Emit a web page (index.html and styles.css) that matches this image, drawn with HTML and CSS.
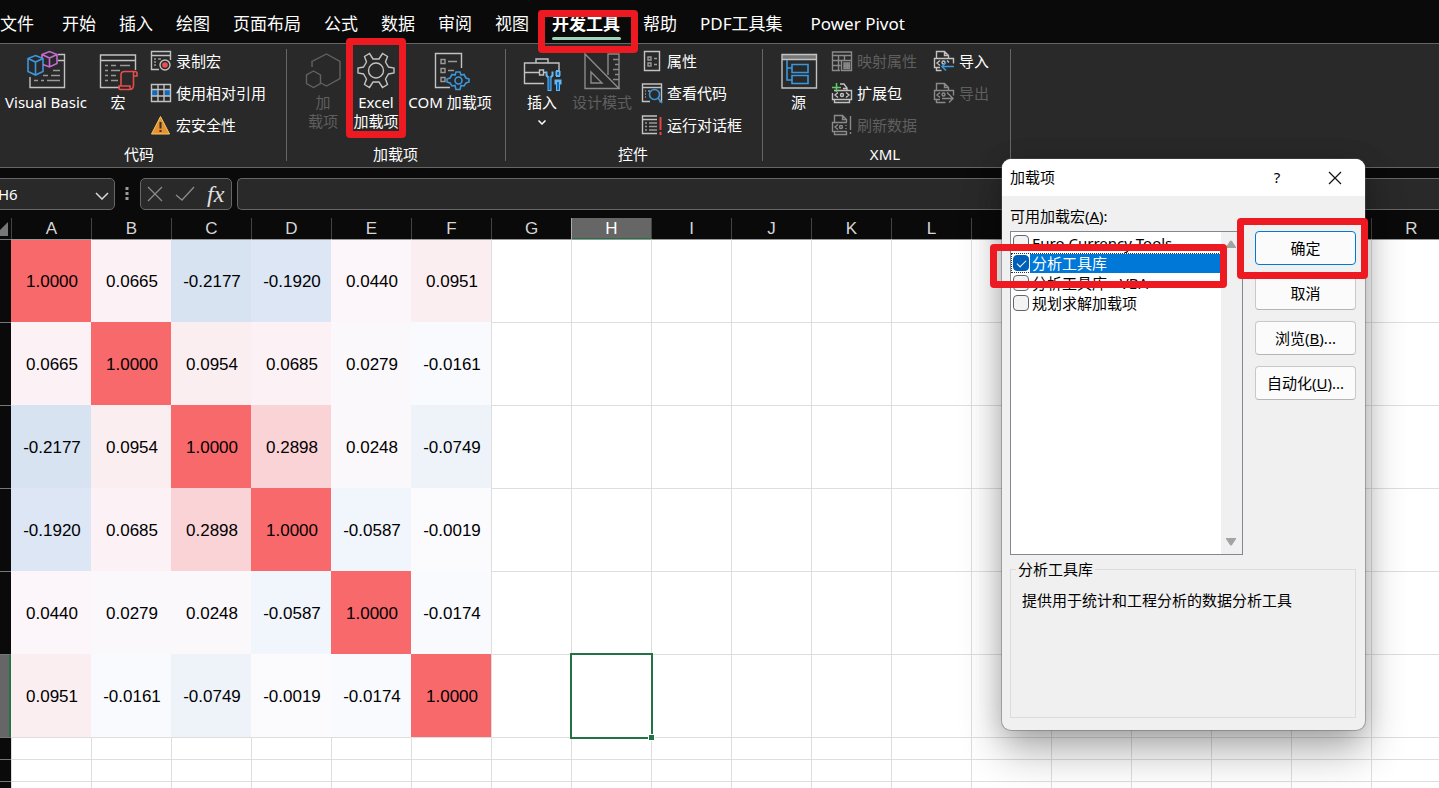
FILE: index.html
```html
<!DOCTYPE html>
<html lang="zh-CN">
<head>
<meta charset="utf-8">
<title>Excel - 开发工具</title>
<link rel="stylesheet" href="styles.css">
</head>
<body>
<nav class="tabs">
  <button class="tab">文件</button>
  <button class="tab tab-home">开始</button>
  <button class="tab">插入</button>
  <button class="tab">绘图</button>
  <button class="tab">页面布局</button>
  <button class="tab">公式</button>
  <button class="tab">数据</button>
  <button class="tab">审阅</button>
  <button class="tab">视图</button>
  <button class="tab active">开发工具<span class="mark mark-tab"></span></button>
  <button class="tab">帮助</button>
  <button class="tab">PDF工具集</button>
  <button class="tab tab-last">Power Pivot</button>
</nav>

<section class="ribbon">
  <div class="group group-code">
    <div class="tools">
      <button class="big vb">
        <svg class="icon" viewBox="0 0 40 40"><path class="l" d="M32 4.500h6.500V37.500H4V27M32 10.500h6.500"/><path class="d" d="M27 20.500h7M17 25.500h5M25 25.500h9M8 30.500h4M15 30.500h3M21 30.500h13"/><path class="bl" d="M9.500 5.500l7.500 3v13l-7.500 3.500-7.500-3.500v-13zM2 8.500l7.500 3.500 7.500-3.500M9.500 12v13"/><path class="pu" d="M16 8V4.500l7.500-3 7.500 3v9L23.500 17 17 14.500M16 4.500L23.500 8 31 4.500M23.500 8v9"/></svg>
        <span>Visual Basic</span>
      </button>
      <button class="big macro">
        <svg class="icon" viewBox="0 0 40 40"><path class="l" d="M22 37.500H2.500V5h35v15M2.500 10.500h35"/><path class="d" d="M7 15.500h3M13 15.500h5M22 15.500h10M7 20.500h3M13 20.500h9M7 25.500h3M13 25.500h5M7 30.500h3M13 30.500h7"/><path class="re" d="M23 36V25q0-3.500 3.500-3.500H37q2 0 2 2V26h-4M35.500 26v-2.500q0-2 1.500-2M35.500 26v9q0 4.500-4 4.500H23q-2 0-2-1.500v-2h11v2q0 1.500 1.500 1.500"/></svg>
        <span>宏</span>
      </button>
      <div class="smalls">
        <button class="small"><svg class="ico" viewBox="0 0 20 20"><path class="l" d="M8 18.500H.5V.5h19V9M.5 4.500h19"/><path class="d" d="M3 8h2M7 8h3M3 11h2M3 14h2"/><circle class="l" cx="14" cy="14" r="5"/><circle cx="14" cy="14" r="2.800" fill="#f04f4f"/></svg>录制宏</button>
        <button class="small"><svg class="ico" viewBox="0 0 20 20"><path fill="#0a6cc5" d="M1 7h5v6H1zM14 7h5v6h-5z"/><path class="l" d="M.5 1.500h19v17H.5zM.5 6.500h19M.5 13h19M7 1.500v17M13 1.500v17"/></svg>使用相对引用</button>
        <button class="small"><svg class="ico" viewBox="0 0 20 20"><path d="M9.500 1.500L18.500 19H.5z" fill="#e8912d" stroke="#f6c86a"/><path d="M9.500 7v6.500M9.500 15v2" stroke="#333" stroke-width="2"/></svg>宏安全性</button>
      </div>
    </div>
    <div class="caption">代码</div>
  </div>

  <div class="group group-addins">
    <div class="tools">
      <button class="big addin" disabled>
        <svg class="icon" viewBox="0 0 40 40"><path class="g" d="M9 17V11.500L23.500 4 37 11.500v17L23.500 36 17 32.500"/><path class="g" d="M10.500 21l7 4v8.500l-7 4-7-4V25z"/></svg>
        <span>加<br>载项</span>
      </button>
      <button class="big excel">
        <svg class="icon" viewBox="0 0 40 40"><path class="l" d="M13.500 3.500l3.500 5.500h6l3.500-5.500 5 3-2 5.500 3 5 5.500 1v5l-5.500 1-3 5 2 5.500-5 3-3.500-5.500h-6l-3.500 5.500-5-3 2-5.500-3-5-5.500-1v-5l5.500-1 3-5-2-5.500z"/><circle class="l" cx="20" cy="20.500" r="7.500"/></svg>
        <span>Excel<br>加载项</span>
        <span class="mark mark-excel"></span>
      </button>
      <button class="big com">
        <svg class="icon" viewBox="0 0 40 40"><path class="l" d="M20 37.500H5.500V3.500h26V18"/><path class="d" d="M11 9.500h4v4h-4zM11 18.500h4v4h-4zM11 27.500h4v4h-4zM18 11.500h9M18 20.500h6"/><path class="bl" d="M26 22h4l1 3 3-.5 2 3.500 3 1v3l-3 1-2 3-3-.5-1 4h-4l-1-4-3 .5-2-3-3-1v-3l3-1 2-3.500 3 .5z"/><circle class="bl" cx="28.500" cy="30.500" r="3.500"/></svg>
        <span>COM 加载项</span>
      </button>
    </div>
    <div class="caption">加载项</div>
  </div>

  <div class="group group-controls">
    <div class="tools">
      <button class="big insert">
        <svg class="icon" viewBox="0 0 40 40"><path class="l" d="M22 33.500H2.500V13H37v7M14 13V9h12v4M2.500 22.500h15M21 22.500h4"/><path class="l" d="M17.500 20h4v5h-4z"/><path d="M27.500 28v13M36 20v7M36 31v10" stroke="#69b5ee" stroke-width="4"/><path d="M24.500 21.500v4l3 3 3-3v-4" fill="none" stroke="#69b5ee" stroke-width="2"/><path d="M36 21v5M32.500 32h7" stroke="#69b5ee" stroke-width="5"/><path d="M27.500 27v13M36 22v3M36 32v8" stroke="#0d69b7" stroke-width="2"/></svg>
        <span>插入</span>
        <svg class="chev" viewBox="0 0 8 5"><path d="M.5.5L4 4 7.500.5"/></svg>
      </button>
      <button class="big design" disabled>
        <svg class="icon" viewBox="0 0 40 40"><path class="m" d="M3 4v34.500h34zM9 22v11h11zM26 25V4h11v34M37 9.500h-6M37 14.500h-4M37 19.500h-6M37 24.500h-4M37 29.500h-6"/></svg>
        <span>设计模式</span>
      </button>
      <div class="smalls">
        <button class="small"><svg class="ico" viewBox="0 0 20 20"><path class="l" d="M2.500.5h15v19h-15z"/><path class="d" d="M6 6h3v3H6zM6 12h3v3H6zM12 7.500h3M12 13.500h3"/></svg>属性</button>
        <button class="small"><svg class="ico" viewBox="0 0 20 20"><path class="l" d="M8 18.500H.5V1h19v17.500h-2M.5 4.500h19"/><path class="d" d="M3 8h1M6 8h2M3 11h1M3 14h1"/><circle class="bl" cx="12.500" cy="11.500" r="5"/><path class="bl" d="M16 15l4 5"/></svg>查看代码</button>
        <button class="small"><svg class="ico" viewBox="0 0 20 20"><path class="l" d="M15 18.500H.5V1H15M.5 4.500H15"/><path class="d" d="M3 8h2M7 8h8M3 11.500h2M7 11.500h8M3 15h2M7 15h8"/><path d="M18.500 2v13M18.500 17v3" stroke="#e64545" stroke-width="2"/></svg>运行对话框</button>
      </div>
    </div>
    <div class="caption">控件</div>
  </div>

  <div class="group group-xml">
    <div class="tools">
      <button class="big source">
        <svg class="icon" viewBox="0 0 40 40"><path fill="#777" d="M3 4h34v5H3z"/><path class="l" d="M3 4.500h34.500v33.500H3zM3 9.500h34.500"/><path class="bl" d="M8 10v20h5M8 18h5M13 14.500h16v8H13zM13 25.500h16v8H13z"/></svg>
        <span>源</span>
      </button>
      <div class="smalls maps">
        <button class="small" disabled><svg class="ico" viewBox="0 0 20 20"><path class="m" d="M8 19.500H.5V1h19v8M.5 4.500h19M.5 9.500h9M.5 14.500h8M6.500 5v14M12.500 5v4M9.500 9.500h10v10h-10zM12 12h2v2h-2zM15.500 12h2v2h-2zM12 15.500h2v2h-2zM15.500 15.500h2v2h-2z"/></svg>映射属性</button>
        <button class="small"><svg class="ico" viewBox="0 0 20 20"><path class="l" d="M8 1h4l3 4v2M15 5.500h-4M2 7.500h17.500v9H.5V10M2.500 16.500v3h15v-3M6 9.500l-3 2.500 3 2.500M14 9.500l3 2.500-3 2.500"/><circle class="l" cx="10" cy="12" r="1.500"/><path d="M4.500 0v9M0 4.500h9" stroke="#5fd068" stroke-width="1.500"/></svg>扩展包</button>
        <button class="small" disabled><svg class="ico" viewBox="0 0 20 20"><path class="m" d="M2.500 7V.5h8l4 4V7M10.500.5v4h4M15 7.500H.5v9H15M2.500 16.500v3h12v-3M6 9.500L3 12l3 2.500M14 10v1M14 13v1M18.500 1v14M18.500 17v2"/><circle class="m" cx="9" cy="12" r="1.500"/></svg>刷新数据</button>
      </div>
      <div class="smalls">
        <button class="small"><svg class="ico" viewBox="0 0 20 20"><path class="l" d="M2.500 7V.5h8l4 4V7M10.500.5v4h4M6 16.500H.5v-9h19v5M2.500 16.500v3h5M6 9.500L3 12l3 2.500M13 9.500l2 2"/><circle class="l" cx="9.500" cy="11.500" r="1.500"/><path class="bl" d="M20 15.500H8M12 11.500l-4 4 4 4"/></svg>导入</button>
        <button class="small" disabled><svg class="ico" viewBox="0 0 20 20"><path class="m" d="M2.500 7V.5h8l4 4V7M10.500.5v4h4M6 16.500H.5v-9h19v5M2.500 16.500v3h9M6 9.500L3 12l3 2.500M13 9.500l2 2M8 15.500h11M15 11.500l4 4-4 4"/><circle class="m" cx="9.500" cy="11.500" r="1.500"/></svg>导出</button>
      </div>
    </div>
    <div class="caption">XML</div>
  </div>
</section>

<section class="formula">
  <div class="namebox">
    <input aria-label="名称框" value="H6">
    <button aria-label="展开名称框"><svg width="14" height="8" viewBox="0 0 14 8"><path d="M1 1l6 6 6-6" fill="none" stroke="#d8d8d8" stroke-width="1.500"/></svg></button>
  </div>
  <svg class="dots" width="4" height="14" viewBox="0 0 4 14"><path d="M.5 0h3v3h-3zM.5 5h3v3h-3zM.5 10h3v3h-3z" fill="#999"/></svg>
  <div class="entry">
    <button aria-label="取消输入"><svg width="16" height="16" viewBox="0 0 16 16"><path d="M1 1l14 14M15 1L1 15" stroke="#8a8a8a" stroke-width="1.300"/></svg></button>
    <button aria-label="输入"><svg width="20" height="16" viewBox="0 0 20 16"><path d="M1 9l6 5L19 1" fill="none" stroke="#8a8a8a" stroke-width="1.300"/></svg></button>
    <button class="fx" aria-label="插入函数">fx</button>
  </div>
  <input class="content" aria-label="编辑栏">
</section>

<main class="sheet">
<table>
<colgroup><col class="rowcol"><col span="18" class="datacol"></colgroup>
<thead><tr><th class="corner"><svg width="8" height="14" viewBox="0 0 8 14"><path d="M8 0v14H0V8z" fill="#777"/></svg></th><th>A</th><th>B</th><th>C</th><th>D</th><th>E</th><th>F</th><th>G</th><th class="on">H</th><th>I</th><th>J</th><th>K</th><th>L</th><th>M</th><th>N</th><th>O</th><th>P</th><th>Q</th><th>R</th></tr></thead>
<tbody>
<tr class="tall"><th></th><td class="one">1.0000</td><td class="p2">0.0665</td><td class="n4">-0.2177</td><td class="n3">-0.1920</td><td class="p1">0.0440</td><td class="p3">0.0951</td><td></td><td></td><td></td><td></td><td></td><td></td><td></td><td></td><td></td><td></td><td></td><td></td></tr>
<tr class="tall"><th></th><td class="p2">0.0665</td><td class="one">1.0000</td><td class="p3">0.0954</td><td class="p2">0.0685</td><td class="p0">0.0279</td><td class="n0">-0.0161</td><td></td><td></td><td></td><td></td><td></td><td></td><td></td><td></td><td></td><td></td><td></td><td></td></tr>
<tr class="tall"><th></th><td class="n4">-0.2177</td><td class="p3">0.0954</td><td class="one">1.0000</td><td class="p4">0.2898</td><td class="p0">0.0248</td><td class="n2">-0.0749</td><td></td><td></td><td></td><td></td><td></td><td></td><td></td><td></td><td></td><td></td><td></td><td></td></tr>
<tr class="tall"><th></th><td class="n3">-0.1920</td><td class="p2">0.0685</td><td class="p4">0.2898</td><td class="one">1.0000</td><td class="n1">-0.0587</td><td class="z">-0.0019</td><td></td><td></td><td></td><td></td><td></td><td></td><td></td><td></td><td></td><td></td><td></td><td></td></tr>
<tr class="tall"><th></th><td class="p1">0.0440</td><td class="p0">0.0279</td><td class="p0">0.0248</td><td class="n1">-0.0587</td><td class="one">1.0000</td><td class="n0">-0.0174</td><td></td><td></td><td></td><td></td><td></td><td></td><td></td><td></td><td></td><td></td><td></td><td></td></tr>
<tr class="tall"><th class="on"></th><td class="p3">0.0951</td><td class="n0">-0.0161</td><td class="n2">-0.0749</td><td class="z">-0.0019</td><td class="n0">-0.0174</td><td class="one">1.0000</td><td></td><td class="selected"><span class="handle"></span></td><td></td><td></td><td></td><td></td><td></td><td></td><td></td><td></td><td></td><td></td></tr>
<tr><th></th><td></td><td></td><td></td><td></td><td></td><td></td><td></td><td></td><td></td><td></td><td></td><td></td><td></td><td></td><td></td><td></td><td></td><td></td></tr>
<tr><th></th><td></td><td></td><td></td><td></td><td></td><td></td><td></td><td></td><td></td><td></td><td></td><td></td><td></td><td></td><td></td><td></td><td></td><td></td></tr>
<tr><th></th><td></td><td></td><td></td><td></td><td></td><td></td><td></td><td></td><td></td><td></td><td></td><td></td><td></td><td></td><td></td><td></td><td></td><td></td></tr>
</tbody>
</table>
</main>

<div class="dialog" role="dialog" aria-label="加载项">
  <header class="titlebar">
    <span class="title">加载项</span>
    <button aria-label="帮助">?</button>
    <button aria-label="关闭"><svg width="14" height="14" viewBox="0 0 14 14"><path d="M1 1l12 12M13 1L1 13" stroke="#111" stroke-width="1.200"/></svg></button>
  </header>
  <div class="body">
    <div class="label">可用加载宏(<u>A</u>):</div>
    <div class="columns">
      <div class="listbox">
        <div class="options">
          <label><input type="checkbox">Euro Currency Tools</label>
          <label class="current"><input type="checkbox" checked><span>分析工具库</span></label>
          <label><input type="checkbox">分析工具库 - VBA</label>
          <label><input type="checkbox">规划求解加载项</label>
        </div>
        <div class="scroll">
          <svg width="10" height="8" viewBox="0 0 10 8"><path d="M4 1q1-1 2 0l4 6v1H0V7z" fill="#a3a3a3"/></svg>
          <svg width="10" height="8" viewBox="0 0 10 8"><path d="M4 7q1 1 2 0l4-6V0H0v1z" fill="#a3a3a3"/></svg>
        </div>
        <span class="mark mark-option"></span>
      </div>
      <div class="actions">
        <button class="primary">确定<span class="mark mark-ok"></span></button>
        <button>取消</button>
        <button>浏览(<u>B</u>)...</button>
        <button>自动化(<u>U</u>)...</button>
      </div>
    </div>
    <fieldset>
      <legend>分析工具库</legend>
      <p>提供用于统计和工程分析的数据分析工具</p>
    </fieldset>
  </div>
</div>
</body>
</html>
```

FILE: styles.css
```css
* { box-sizing: border-box; }

body {
  margin: 0;
  height: 100vh;
  overflow: hidden;
  display: flex;
  flex-direction: column;
  background: #0a0a0a;
  color: #fff;
  font: 15px/19px "Noto Sans", "Noto Sans CJK SC", sans-serif;
}

button, input {
  font: inherit;
  color: inherit;
  background: none;
  border: 0;
  padding: 0;
  margin: 0;
}

/* Tab strip */
.tabs {
  display: flex;
  flex: none;
  gap: 23px;
  height: 43px;
  font-size: 17px;
}
.tab { padding-top: 4px; white-space: nowrap; }
.tab-home { margin-left: 5px; }
.tab-last { margin-left: 5px; }
.tab.active {
  position: relative;
  font-weight: 700;
}
.tab.active::before {
  content: "";
  position: absolute;
  left: 0;
  right: -1px;
  top: 37px;
  height: 3px;
  border-radius: 2px;
  background: #9fd5b7;
}

/* Red highlight frames */
.mark {
  position: absolute;
  z-index: 5;
  border: 7px solid #ee1a22;
  border-radius: 4px;
  pointer-events: none;
}
.mark-tab { left: -14px; right: -18px; top: 10px; height: 43px; }
.mark-excel { left: 0; right: 0; top: -6px; height: 100px; }
.mark-option { left: -21px; right: 15px; top: 12px; height: 44px; }
.mark-ok { left: -19px; right: -13px; top: -14px; height: 61px; }

/* Ribbon */
.ribbon {
  display: flex;
  flex: none;
  height: 125px;
  background: #292929;
  border-top: 1px solid #666;
  border-bottom: 1px solid #666;
}
.group {
  display: flex;
  flex-direction: column;
  flex: none;
  position: relative;
}
.group::after {
  content: "";
  position: absolute;
  right: 0;
  top: 5px;
  bottom: 6px;
  width: 1px;
  background: #666;
}
.group-code { width: 287px; }
.group-addins { width: 219px; padding-left: 13px; }
.group-controls { width: 257px; padding-left: 16px; }
.group-xml { width: 248px; padding-left: 13px; }
.tools { display: flex; height: 101px; }
.caption { text-align: center; }
.group-code .caption { padding-right: 9px; }
.group-addins .caption { padding-right: 15px; }
.group-controls .caption { padding-right: 19px; }
.group-xml .caption { padding-right: 17px; }

.big {
  display: flex;
  flex-direction: column;
  align-items: center;
  flex: none;
  padding-top: 6px;
  position: relative;
  white-space: nowrap;
}
.big span { margin-top: 3px; }
.big .mark { margin: 0; }
.big:disabled, .small:disabled { color: #5f5f5f; }
.vb { width: 92px; }
.macro { width: 52px; margin-right: 7px; }
.addin { width: 46px; }
.excel { width: 60px; }
.com { width: 88px; }
.insert { width: 40px; }
.design { width: 80px; }
.source { width: 45px; margin-right: 11px; }
.icon { width: 40px; height: 40px; flex: none; overflow: visible; }
.chev { width: 8px; height: 5px; margin-top: 8px; fill: none; stroke: #fff; stroke-width: 1.500; }

.smalls { display: flex; flex-direction: column; padding-top: 1px; }
.smalls.maps { margin-right: 17px; }
.small {
  display: flex;
  align-items: center;
  gap: 5px;
  height: 32px;
  white-space: nowrap;
}
.ico { width: 20px; height: 20px; flex: none; overflow: visible; }

.l, .d, .g, .m, .bl, .pu, .re { fill: none; stroke-width: 1.400; }
.l { stroke: #c2c2c2; }
.d { stroke: #999; }
.g { stroke: #616161; }
.m { stroke: #8a8a8a; }
.bl { stroke: #3b97dc; stroke-width: 1.600; }
.pu { stroke: #c46bce; stroke-width: 1.600; }
.re { stroke: #e64c4c; stroke-width: 1.600; }

/* Formula bar */
.formula {
  display: flex;
  align-items: center;
  flex: none;
  height: 50px;
  padding-top: 2px;
}
.namebox, .entry, .content {
  height: 32px;
  border: 1px solid #666;
  border-radius: 5px;
  background: #292929;
}
.namebox {
  display: flex;
  align-items: center;
  justify-content: space-between;
  width: 123px;
  margin-left: -8px;
  padding: 0 5px;
}
.namebox input { width: 70px; }
.dots { margin: 0 11px 0 10px; }
.entry {
  display: flex;
  align-items: center;
  gap: 12px;
  width: 92px;
  padding: 0 6px;
  margin-right: 5px;
}
.entry button { display: flex; }
.entry .fx { font: italic 24px/24px "Liberation Serif", serif; color: #e0e0e0; }
.content { flex: 1; min-width: 0; border-right: 0; border-radius: 5px 0 0 5px; }

/* Worksheet */
.sheet {
  flex: 1;
  min-height: 0;
  overflow: hidden;
  background: #fff;
  color: #000;
}
table {
  table-layout: fixed;
  width: 1451px;
  border-collapse: separate;
  border-spacing: 0;
  font: 17px/20px "Liberation Sans", Arial, sans-serif;
}
.rowcol { width: 11px; }
.datacol { width: 80px; }
th { font-weight: 400; padding: 0; background: #0a0a0a; }
thead th {
  height: 21px;
  padding-top: 1px;
  color: #d6d6d6;
  border-left: 1px solid #444;
}
thead .corner { border-left: 0; line-height: 0; text-align: left; }
thead th.on {
  background: #666;
  color: #fff;
  border-left-color: #aaa;
  box-shadow: inset 0 -1px #217346;
}
tbody tr { height: 22px; }
tbody tr.tall { height: 83px; }
tbody th { border-top: 1px solid #777; }
tbody th.on { background: #666; border-right: 2px solid #217346; }
td {
  padding: 2px 0 0 1px;
  text-align: center;
  border-top: 1px solid #dedede;
  border-left: 1px solid #dedede;
}
tbody tr:first-child td { border-top-color: #999; }
td.one, td.p0, td.p1, td.p2, td.p3, td.p4,
td.n0, td.n1, td.n2, td.n3, td.n4, td.z { border-color: transparent; }
.one { background: #f8696b; }
.p0 { background: #fbf8fc; }
.p1 { background: #fcf5f9; }
.p2 { background: #fcf2f6; }
.p3 { background: #fbeef1; }
.p4 { background: #fad3d7; }
.z { background: #fbfbfe; }
.n0 { background: #f8fafe; }
.n1 { background: #f1f5fc; }
.n2 { background: #eef3fa; }
.n3 { background: #dce6f4; }
.n4 { background: #d7e3f1; }
.selected { position: relative; }
.selected::after {
  content: "";
  position: absolute;
  inset: -2px;
  border: 2px solid #217346;
}
.handle {
  position: absolute;
  z-index: 1;
  right: -4px;
  bottom: -4px;
  width: 7px;
  height: 7px;
  background: #217346;
  border: 1px solid #fff;
}

/* Add-ins dialog */
.dialog {
  position: absolute;
  left: 1002px;
  top: 159px;
  width: 363px;
  border-radius: 9px;
  background: #f0f0f0;
  color: #000;
  box-shadow: 0 0 0 1px rgba(90, 90, 90, 0.4), 0 22px 42px rgba(0, 0, 0, 0.3), 0 2px 24px rgba(0, 0, 0, 0.15);
}
.titlebar {
  display: flex;
  align-items: center;
  height: 37px;
  padding: 0 8px;
  background: #fff;
  border-radius: 9px 9px 0 0;
}
.title { flex: 1; }
.titlebar button { width: 44px; display: flex; justify-content: center; }
.titlebar button + button { margin-left: 14px; }
.body { padding: 11px 9px 12px 8px; }
.label { height: 24px; }
.columns { display: flex; gap: 12px; }
.listbox {
  position: relative;
  display: flex;
  width: 233px;
  height: 324px;
  border: 1px solid #828790;
  background: #fff;
}
.options { flex: 1; padding-top: 1px; }
.options label {
  display: flex;
  align-items: center;
  gap: 3px;
  height: 20px;
  padding-left: 2px;
  white-space: nowrap;
}
.options input {
  appearance: none;
  flex: none;
  width: 16px;
  height: 16px;
  border: 1px solid #666;
  border-radius: 4px;
  background: #f3f3f3;
}
.options input:checked {
  border-color: #005fb8;
  background: #005fb8;
  position: relative;
}
.options input:checked::after {
  content: "";
  position: absolute;
  left: 3px;
  top: 4px;
  width: 8px;
  height: 4px;
  border: solid #fff;
  border-width: 0 0 1px 1px;
  transform: rotate(-45deg);
}
.options .current { border: 1px dotted #333; padding-left: 1px; gap: 1px; }
.current span {
  flex: 1;
  padding-left: 2px;
  background: #0078d7;
  color: #fff;
}
.scroll {
  display: flex;
  flex-direction: column;
  align-items: center;
  justify-content: space-between;
  width: 21px;
  padding: 8px 2px 8px 0;
  background: #f0f0f0;
}
.actions {
  display: flex;
  flex-direction: column;
  gap: 11px;
  flex: 1;
}
.actions button {
  height: 34px;
  border: 1px solid #c8c8c8;
  border-bottom-color: #b5b5b5;
  border-radius: 4px;
  background: #fbfbfb;
}
.actions .primary { position: relative; border-color: #0078d4; }
fieldset {
  height: 158px;
  min-width: 0;
  margin: 5px 0 0;
  padding: 0 11px;
  border: 1px solid #dcdcdc;
}
legend { padding: 0 2px; margin-left: -6px; }
fieldset p { margin: 12px 0 0; }
```
